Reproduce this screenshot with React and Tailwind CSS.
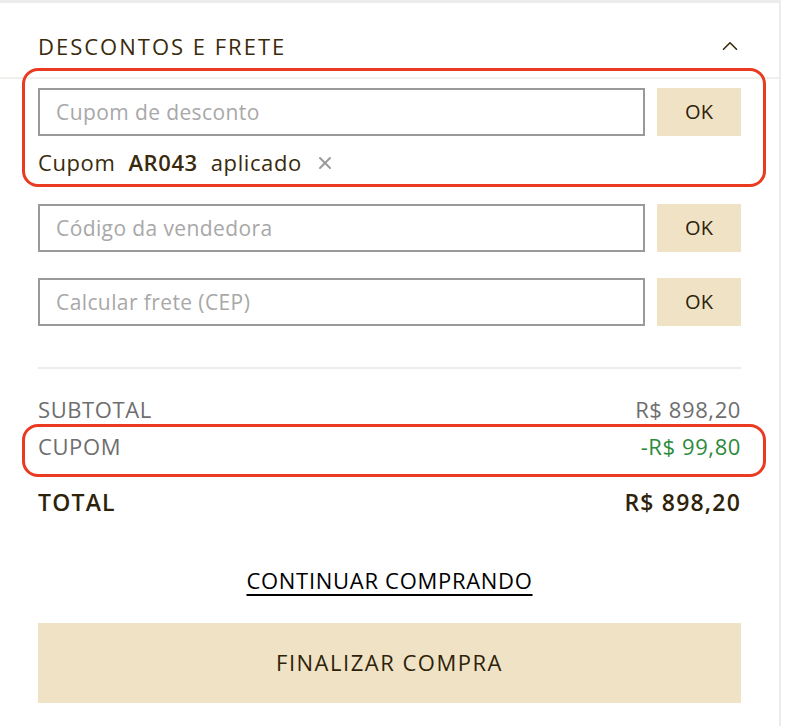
import { ChevronUp, X } from "lucide-react";

function CodeField({ placeholder }) {
  return (
    <div className="flex gap-3">
      <input
        placeholder={placeholder}
        className="h-12 flex-1 border-2 border-[#9a9a9a] bg-white px-4 text-[21px] tracking-[0.4px] text-[#3a2a0c] outline-none placeholder:text-[#a8a8a8]"
      />
      <button className="h-12 w-[84px] bg-[#f0e3c5] text-[20px] text-[#2e220a]">OK</button>
    </div>
  );
}

function Row({ label, value, className = "" }) {
  return (
    <div className={`flex items-center justify-between ${className}`}>
      <span>{label}</span>
      <span>{value}</span>
    </div>
  );
}

export default function App() {
  return (
    <div
      className="relative min-h-[726px] w-[792px] bg-white"
      style={{ fontFamily: '"Open Sans", "Liberation Sans", sans-serif' }}
    >
      <div className="min-h-[726px] w-[781px] border-r-2 border-t-[3px] border-[#ececec]">
        {/* cabeçalho do acordeão */}
        <div className="flex h-[76px] items-center justify-between border-b-2 border-[#efefec] pl-[38px] pr-[36px] pt-[12px]">
          <h2 className="text-[22px] tracking-[2px] text-[#3a2a0c]">DESCONTOS E FRETE</h2>
          <ChevronUp className="h-[26px] w-[26px] text-[#3a2a0c]" strokeWidth={1.5} />
        </div>

        <div className="px-[38px] pt-[9px]">
          <CodeField placeholder="Cupom de desconto" />
          <div className="mt-[10px] flex items-center gap-[13px] text-[22px] tracking-[0.6px] text-[#3a2a0c]">
            <span>Cupom</span>
            <span className="font-semibold">AR043</span>
            <span>aplicado</span>
            <X className="h-[20px] w-[20px] text-[#9a9a9a]" strokeWidth={2.4} />
          </div>

          <div className="mt-[25px] flex flex-col gap-[26px]">
            <CodeField placeholder="Código da vendedora" />
            <CodeField placeholder="Calcular frete (CEP)" />
          </div>

          <div className="mt-[41px] h-[2px] bg-[#ececec]" />

          <Row
            label="SUBTOTAL"
            value="R$ 898,20"
            className="mt-[24px] text-[22px] tracking-[0.6px] text-[#6e6e6e]"
          />
          <div className="mt-[4px] flex items-center justify-between text-[22px] tracking-[0.6px]">
            <span className="text-[#6e6e6e]">CUPOM</span>
            <span className="text-[#2d8a3c]">-R$ 99,80</span>
          </div>
          <Row
            label="TOTAL"
            value="R$ 898,20"
            className="mt-[22px] text-[23px] font-semibold tracking-[1.2px] text-[#2e220a]"
          />

          <div className="mt-[44px] text-center">
            <a
              href="#"
              className="text-[22px] tracking-[0.7px] text-black underline decoration-2 underline-offset-[5px]"
            >
              CONTINUAR COMPRANDO
            </a>
          </div>

          <button className="mt-[26px] h-[80px] w-full bg-[#f0e3c5] text-[22px] tracking-[1.5px] text-[#2e220a]">
            FINALIZAR COMPRA
          </button>
        </div>
      </div>

      {/* marcações em vermelho */}
      <div className="pointer-events-none absolute left-[22px] top-[68px] h-[119px] w-[744px] rounded-[16px] border-[3px] border-[#ea3a22]" />
      <div className="pointer-events-none absolute left-[22px] top-[424px] h-[53px] w-[744px] rounded-[16px] border-[3px] border-[#ea3a22]" />
    </div>
  );
}
